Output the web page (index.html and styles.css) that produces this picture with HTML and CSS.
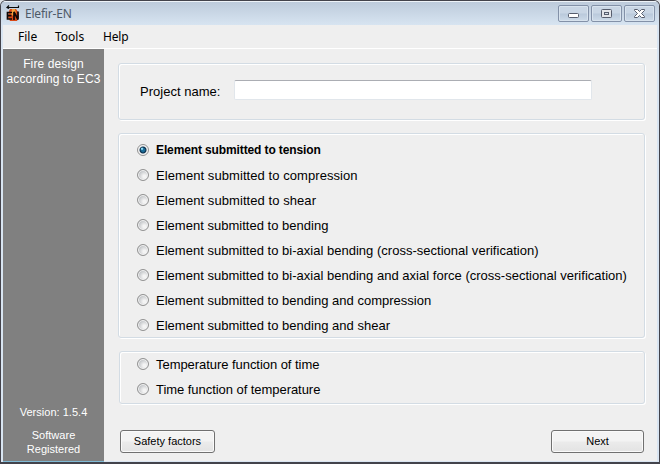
FILE: index.html
```html
<!DOCTYPE html>
<html lang="en">
<head>
<meta charset="utf-8">
<title>Elefir-EN</title>
<link rel="stylesheet" href="styles.css">
</head>
<body>
<div class="window">
  <header class="titlebar">
    <svg class="app-icon" width="14" height="17" viewBox="0 0 14 17">
      <path d="M4 4h6l2 3 1 5-2 4H4l-2-4 1-6z" fill="#d94916"/>
      <path d="M6 4h3l1 4-3 3-2-2z" fill="#f3a13b"/>
      <path d="M1 2.500h12M3 .500l-2 2 2 1M12.500.500v2" stroke="#080808" stroke-width="1.200" fill="none"/>
      <path d="M6 7.500H1.500v6.500H6M2 10.700h3.500M8 15V7l4 7.500V6.500" stroke="#100806" stroke-width="1.700" fill="none"/>
    </svg>
    <span class="title">Elefir-EN</span>
    <div class="controls">
      <span class="control"><svg width="11" height="9" viewBox="0 0 11 9"><rect x=".5" y="4.500" width="10" height="4" rx="1" fill="#fff" stroke="#565d6d"/></svg></span>
      <span class="control"><svg width="11" height="9" viewBox="0 0 11 9"><rect x=".5" y=".5" width="10" height="8" rx="1" fill="#e3e5ea" stroke="#565d6d"/><rect x="3.500" y="3.500" width="4" height="2" fill="#d5dde8" stroke="#565d6d"/></svg></span>
      <span class="control"><svg width="11" height="9" viewBox="0 0 11 9"><path d="M.5.5h3l2 2 2-2h3v1l-3 3 3 3v1h-3l-2-2-2 2h-3v-1l3-3-3-3z" fill="#fff" stroke="#565d6d"/></svg></span>
    </div>
  </header>
  <nav class="menu"><span class="m-file">File</span><span class="m-tools">Tools</span><span class="m-help">Help</span></nav>
  <div class="body">
    <aside class="sidebar">
      <p class="heading">Fire design<br>according to EC3</p>
      <div class="about">
        <p>Version: 1.5.4</p>
        <p>Software<br>Registered</p>
      </div>
    </aside>
    <main class="main">
      <section class="group project">
        <label for="name">Project name:</label>
        <input id="name" type="text">
      </section>
      <section class="group elements">
        <label class="option selected"><i class="radio"></i><span>Element submitted to tension</span></label>
        <label class="option wide"><i class="radio"></i><span>Element submitted to compression</span></label>
        <label class="option wide"><i class="radio"></i><span>Element submitted to shear</span></label>
        <label class="option"><i class="radio"></i><span>Element submitted to bending</span></label>
        <label class="option"><i class="radio"></i><span>Element submitted to bi-axial bending (cross-sectional verification)</span></label>
        <label class="option"><i class="radio"></i><span>Element submitted to bi-axial bending and axial force (cross-sectional verification)</span></label>
        <label class="option"><i class="radio"></i><span>Element submitted to bending and compression</span></label>
        <label class="option"><i class="radio"></i><span>Element submitted to bending and shear</span></label>
      </section>
      <section class="group functions">
        <label class="option"><i class="radio"></i><span>Temperature function of time</span></label>
        <label class="option"><i class="radio"></i><span>Time function of temperature</span></label>
      </section>
      <footer class="actions">
        <button class="safety">Safety factors</button>
        <button class="next">Next</button>
      </footer>
    </main>
  </div>
</div>
</body>
</html>
```
FILE: styles.css
```css
* { box-sizing: border-box; }
html { background: #dfe3e8; }
body { margin: 0; font-family: "Liberation Sans", Arial, sans-serif; color: #000; overflow: hidden; }
p { margin: 0; }
.window {
  width: 660px;
  height: 464px;
  display: flex;
  flex-direction: column;
  padding: 0 2px 1px;
  border: 1px solid #43434b;
  border-bottom-width: 2px;
  border-radius: 6px 6px 0 0;
  background: #d9e5f2;
  overflow: hidden;
}
.titlebar {
  flex: 0 0 24px;
  margin: 0 -2px;
  padding: 0 4px 0 5px;
  display: flex;
  align-items: flex-start;
  border-top: 1px solid #eef3f8;
  background: linear-gradient(#bdcbdb, #d7e4f1);
}
.app-icon { margin-top: 3px; }
.title {
  margin: 4px 0 0 5px;
  font: 12px/16px "Noto Sans", sans-serif;
  letter-spacing: -.2px;
  color: #4e5a68;
}
.controls { display: flex; gap: 2px; margin: 3px 0 0 auto; }
.control {
  width: 31px;
  height: 17px;
  display: flex;
  align-items: center;
  justify-content: center;
  border: 1px solid #8391a8;
  border-radius: 2px;
  box-shadow: inset 0 0 0 1px #d8e3ee;
  background: linear-gradient(#c9d6e5 48%, #b9c9db 52%, #cddbe9);
}
.menu {
  flex: 0 0 24px;
  display: flex;
  padding-left: 15px;
  border-bottom: 1px solid #fff;
  background: #efefef;
  font: 12px/23px "Noto Sans", sans-serif;
}
.m-file { width: 37px; }
.m-tools { width: 48px; }
.m-help { letter-spacing: -.2px; }
.body { flex: 1; display: flex; min-height: 0; background: #efefef; }
.sidebar {
  width: 101px;
  display: flex;
  flex-direction: column;
  justify-content: space-between;
  background: #808080;
  box-shadow: 0 1px #7fbad5;
  color: #fff;
  text-align: center;
  white-space: nowrap;
}
.heading { padding-top: 8px; font-size: 12px; line-height: 15px; letter-spacing: .12px; }
.about { padding-bottom: 5px; font-size: 11px; line-height: 14px; letter-spacing: .02px; }
.about p + p { margin-top: 9px; }
.main { flex: 1; padding: 14px 12px 0 14px; }
.group {
  border: 1px solid #d3dce4;
  border-radius: 3px;
  box-shadow: inset 1px 1px #fff, 1px 1px #fff;
}
.project { height: 57px; display: flex; padding: 16px 0 0 21px; font-size: 13px; letter-spacing: .02px; }
.project label { width: 94px; line-height: 23px; white-space: nowrap; }
.project input {
  width: 358px;
  height: 20px;
  padding: 0 4px;
  border: 1px solid #e1e6eb;
  border-top-color: #abadb3;
  border-radius: 2px;
  background: #fff;
}
.elements { height: 205px; margin-top: 13px; padding: 4px 0 0 18px; }
.functions { height: 53px; margin: 13px 0 0 1px; padding: 0 0 0 17px; }
.option { display: flex; align-items: center; height: 25px; font-size: 13px; letter-spacing: .015px; white-space: nowrap; }
.functions .option { letter-spacing: -.05px; }
.wide { letter-spacing: .07px; }
.selected { font-size: 12px; font-weight: bold; letter-spacing: -.12px; }
.selected span { margin-bottom: 2px; }
.radio {
  flex: none;
  width: 12px;
  height: 12px;
  margin: 0 7px 1px 0;
  border: 1px solid #929292;
  border-radius: 50%;
  box-shadow: inset 0 0 0 1px #f4f4f4;
  background: radial-gradient(circle at 65% 65%, #f4f4f4 15%, #b9bcc0 75%);
}
.selected .radio {
  box-shadow: none;
  background: radial-gradient(circle at 40% 38%, #8fdcf5 0 7%, transparent 19%), radial-gradient(circle, #1a6f9c 0 1.5px, #0d304c 3px, #f3f3f3 4px);
}
.actions { display: flex; justify-content: space-between; margin: 26px 1px 0 2px; }
.actions button {
  height: 23px;
  padding: 0 0 2px;
  border: 1px solid #707070;
  border-radius: 3px;
  box-shadow: inset 0 0 0 1px #fafafa;
  background: linear-gradient(#f3f3f3 48%, #ebebeb 52%, #e3e3e3);
  font: 11px "Liberation Sans", Arial, sans-serif;
  color: #000;
}
.safety { width: 95px; }
.next { width: 93px; }
```
